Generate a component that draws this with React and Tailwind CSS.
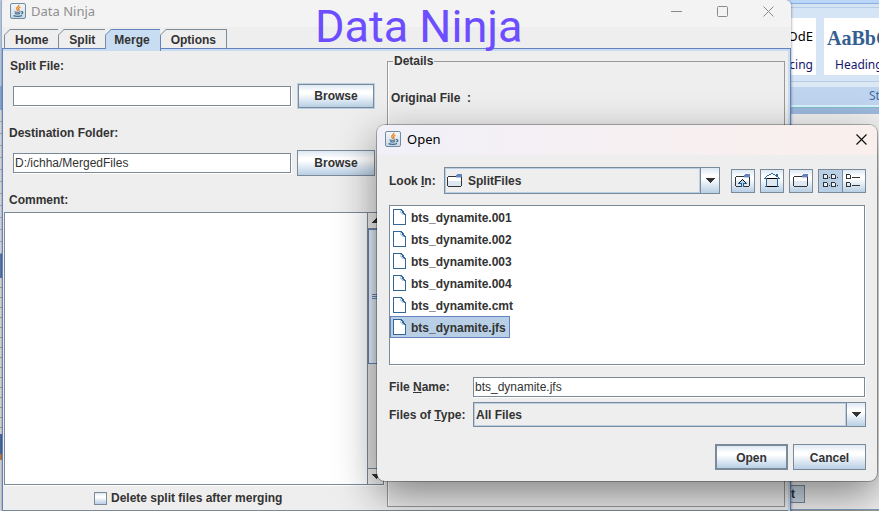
import React from "react";

const files = [
  "bts_dynamite.001",
  "bts_dynamite.002",
  "bts_dynamite.003",
  "bts_dynamite.004",
  "bts_dynamite.cmt",
  "bts_dynamite.jfs",
];

const metal = "bg-[linear-gradient(#dde8f3_0%,#ffffff_30%,#ffffff_40%,#b8cfe5_100%)]";
const field =
  "h-5 min-w-0 border border-[#7a8a99] bg-white pl-px text-xs text-[#333] shadow-[1px_1px_0_#fff] outline-none";

function JavaIcon() {
  return (
    <svg width="16" height="16" viewBox="0 0 16 16" fill="none" className="shrink-0" aria-hidden="true">
      <defs>
        <linearGradient id="cupTile" x1="0" y1="0" x2="0" y2="1">
          <stop offset="0" stopColor="#f6f8fa" />
          <stop offset="1" stopColor="#c9d8e4" />
        </linearGradient>
      </defs>
      <rect x="0.5" y="0.5" width="15" height="15" rx="1.5" fill="url(#cupTile)" stroke="#6f8ca4" />
      <path d="M8.8 1.8c.8 1.6-2.8 2.4-2 4.2.3.7.9 1 .8 1.800M10.400 4c-1.800.8-2.300 1.700-1.500 2.700.4.500.2.900-.2 1.300" stroke="#e8821e" strokeWidth="1.300" />
      <path d="M4.500 8.700c1.500.6 4.500.5 6 0M5 10.500c1.300.5 3.700.5 5 0M3.500 12.600c2.200 1 6.500.9 8.500-.1M11 8.700c2.300-.5 2.500 1.700.2 2.300" stroke="#3f6a8f" strokeWidth="1.200" />
    </svg>
  );
}

function FolderShape() {
  return (
    <>
      <path d="M1 3h13v9H1z" fill="#dde8f3" />
      <path d="M1 3h13v4H1z" fill="#fff" />
      <path d="M1 2h8v1H1zM0 3h1v9H0zM1 12h13v1H1zM14 3h1v9h-1z" fill="#333" />
      <path d="M10 0h5v3H9V1h1z" fill="#6382bf" />
      <path d="M9 3h5v1H9z" fill="#b8cfe5" />
    </>
  );
}

function FolderIcon() {
  return (
    <svg width="16" height="14" viewBox="0 0 16 14" shapeRendering="crispEdges" className="shrink-0" aria-hidden="true">
      <FolderShape />
    </svg>
  );
}

function FolderUpIcon() {
  return (
    <svg width="16" height="14" viewBox="0 0 16 14" shapeRendering="crispEdges" aria-hidden="true">
      <FolderShape />
      <path d="M7 6h1v1h1v1h1v1h1v1H9v3H6v-3H4V9h1V8h1V7h1z" fill="#b8cfe5" />
      <path d="M7 5h1v1H7zM6 6h1v1H6zM8 6h1v1H8zM5 7h1v1H5zM9 7h1v1H9zM4 8h1v1H4zM10 8h1v1h-1z" fill="#111" />
      <path d="M3 9h4v1H3zM8 9h4v1H8zM6 10h1v3H6zM8 10h1v3H8z" fill="#215f91" />
    </svg>
  );
}

function HomeIcon() {
  return (
    <svg width="16" height="15" viewBox="0 0 16 15" shapeRendering="crispEdges" aria-hidden="true">
      <path d="M3 6h10v7H3z" fill="#dde8f3" />
      <path d="M7 1h2v1h2v1h2v1h1v1H2V4h1V3h2V2h2z" fill="#fff" />
      <path d="M7 0h2v1H7zM5 1h2v1H5zM9 1h2v1H9zM3 2h2v1H3zM11 2h1v1h-1zM2 3h1v1H2zM1 4h1v1H1zM0 5h3v1H0zM13 5h3v1h-3zM14 4h1v1h-1zM12 1h2v3h-2zM2 6h1v8H2zM13 6h1v8h-1zM1 13h1v1H1zM14 13h1v1h-1z" fill="#2f6896" />
      <path d="M3 5h10v1H3zM3 13h10v1H3z" fill="#000" />
    </svg>
  );
}

function ListViewIcon() {
  return (
    <svg width="16" height="14" viewBox="0 0 16 14" shapeRendering="crispEdges" aria-hidden="true">
      <path d="M1 1h3v3H1zM9 1h3v3H9zM1 9h3v3H1zM9 9h3v3H9z" fill="#e8f0f8" />
      <path
        d="M0 0h4v1h1v4H0V0M1 1v3h3V1zM8 0h4v1h1v4H8V0M9 1v3h3V1zM0 8h4v1h1v4H0V8M1 9v3h3V9zM8 8h4v1h1v4H8V8M9 9v3h3V9zM6 3h1v1H6zM14 3h1v1h-1zM6 11h1v1H6zM14 11h1v1h-1z"
        fill="#333"
        fillRule="evenodd"
      />
    </svg>
  );
}

function DetailsViewIcon() {
  return (
    <svg width="16" height="14" viewBox="0 0 16 14" shapeRendering="crispEdges" aria-hidden="true">
      <path
        d="M0 0h4v1h1v4H0V0M1 1v3h3V1zM0 8h4v1h1v4H0V8M1 9v3h3V9zM6 3h8v1H6zM6 11h8v1H6z"
        fill="#333"
        fillRule="evenodd"
      />
    </svg>
  );
}

function FileIcon() {
  return (
    <svg width="13" height="16" viewBox="0 0 13 16" shapeRendering="crispEdges" className="shrink-0" aria-hidden="true">
      <path d="M1 1h7l4 4v10H1z" fill="#fff" />
      <path d="M0 0h9v1H1v14h11V6h1v10H0zM8 1h2v1H8zM9 2h2v1H9zM10 3h1v1h-1zM11 4h1v1h-1zM12 5h1v1h-1z" fill="#336699" />
      <path d="M7 1h1v2h1v1h1v1h1v1H9V5H8V4H7z" fill="#b8cfe5" />
      <path d="M8 2h1v2h1v1h1v1h1V5h-1V4h-1V3H9V2z" fill="#336699" />
    </svg>
  );
}

function Tab({ children, active }) {
  return (
    <button
      type="button"
      role="tab"
      aria-selected={!!active}
      className={
        active
          ? "relative -mb-0.5 h-[22px] border-t border-r border-[#6382bf] bg-[#c8ddf2] pr-2.5 pb-0.5 pl-2"
          : "relative h-5 border-t border-r border-[#7a8a99] px-[10px] first:border-l"
      }
    >
      <svg width="7" height="7" viewBox="0 0 7 7" className="absolute -top-px -left-px" aria-hidden="true">
        <path d="M0 0h6.500L0 6.500z" fill="#eee" />
        <path d="M0 6.500L6.500 0" stroke={active ? "#6382bf" : "#7a8a99"} />
      </svg>
      {children}
    </button>
  );
}

function Browse({ focused }) {
  return (
    <button
      type="button"
      className={`shrink-0 border border-[#7a8a99] ${metal} ${
        focused ? "m-px h-6 w-[76px] outline outline-[#b8cfe5]" : "h-[26px] w-[78px]"
      }`}
    >
      Browse
    </button>
  );
}

function Arrow() {
  return (
    <svg width="10" height="5" viewBox="0 0 10 5" shapeRendering="crispEdges" aria-hidden="true">
      <path d="M0 0h10L5 5z" fill="#333" />
    </svg>
  );
}

function Combo({ id, icon, value, tall }) {
  return (
    <div className={`flex min-w-0 flex-1 border border-[#7a8a99] ${tall ? "h-[27px]" : "h-[25px]"}`}>
      <div className="flex min-w-0 flex-1 items-center border border-[#b8cfe5]">
        {icon && <span className="pl-px">{icon}</span>}
        <select
          id={id}
          defaultValue={value}
          className={`min-w-0 flex-1 appearance-none bg-transparent outline-none ${icon ? "pl-[5px]" : "pl-px"}`}
        >
          <option>{value}</option>
        </select>
      </div>
      <span className={`pointer-events-none flex w-[19px] shrink-0 items-center justify-center border-l border-[#7a8a99] ${metal}`}>
        <Arrow />
      </span>
    </div>
  );
}

function DocumentApp() {
  return (
    <>
      <div className="absolute inset-y-0 left-0 w-1 bg-[#dcdfe4]" aria-hidden="true">
        <div className="h-[86px] bg-[#bdd2ee]" />
        <div className="h-6 bg-[#8fb0dc]" />
        <div className="h-36 bg-[repeating-linear-gradient(#dfe3ea_0_11px,#a9b0b9_11px_12px)]" />
        <div className="h-6 bg-[#5d7db5]" />
        <div className="h-[156px] bg-[repeating-linear-gradient(#e0e0e4_0_9px,#a8a3a3_9px_10px)]" />
        <div className="h-5 bg-[#4d6fa8]" />
        <div className="h-1.5 bg-[#b98250]" />
      </div>
      <div className="absolute inset-y-0 right-0 flex w-[100px] flex-col bg-[#f0f0f0] font-normal">
        <div className="h-[3px] bg-[#bcd6fb]" />
        <div className="h-1 border-t border-[#86aee0] bg-[#d5e3f2]" />
        <div className="flex h-[75px] gap-2 border-y border-[#b5cde6] bg-[#d6e5f5] pt-2.5 font-['Noto_Sans',sans-serif]">
          <div className="flex h-[57px] w-[37px] shrink-0 flex-col items-end justify-between bg-white pt-2.5 pr-[3px] pb-0.5 whitespace-nowrap">
            <span className="text-[13px] leading-4 text-black">OdE</span>
            <span className="text-xs leading-4 text-[#15156b]">cing</span>
          </div>
          <div className="flex h-[57px] w-[55px] shrink-0 flex-col justify-between bg-white pt-2.5 pb-0.5 pl-[3px] whitespace-nowrap">
            <span className="font-['Liberation_Serif',serif] text-xl leading-5 font-bold text-[#365f91]">AaBbC</span>
            <span className="pl-2 text-xs leading-4 text-[#15156b]">Heading</span>
          </div>
        </div>
        <div className="h-[5px] bg-[#dce8f4]" />
        <div className="flex h-[18px] items-center justify-end bg-[#bfd5ef] font-['Noto_Sans',sans-serif] text-xs text-[#3e6aaa]">
          <span className="w-2.5">St</span>
        </div>
        <div className="h-[3px] border-b border-[#7dbdcb] bg-[#d9f1fa]" />
        <div className="h-1.5 bg-[#9db8dd]" />
        <div className="flex flex-1 flex-col justify-end">
          <div className="mb-1.5 ml-3 flex h-[18px] w-3.5 items-center border border-l-0 border-[#7a8a99] bg-[#cbd9e6] font-bold">t</div>
          <div className="h-0.5 border-t border-[#7d9cc0] bg-[#999]" />
        </div>
      </div>
    </>
  );
}

function MergeWindow() {
  return (
    <main className="absolute inset-y-0 right-[88px] left-0.5 flex flex-col rounded-tr-md bg-[#eee] shadow-[0_0_3px_rgba(0,0,0,0.5)]">
      <header className="flex h-[27px] shrink-0 items-start rounded-t-md bg-[#f3f3f3] pt-[3px] pl-2">
        <JavaIcon />
        <h1 className="pl-[5px] font-['Noto_Sans',sans-serif] text-[13px] leading-4 font-normal text-[#8f8f8f]">Data Ninja</h1>
        <div className="ml-auto flex gap-[35px] pt-[3px] pr-[17px] text-[#8a8a8a]">
          <button type="button" aria-label="Minimize">
            <svg width="11" height="11" viewBox="0 0 11 11" stroke="currentColor"><path d="M0 5.500h11" /></svg>
          </button>
          <button type="button" aria-label="Maximize">
            <svg width="11" height="11" viewBox="0 0 11 11" stroke="currentColor" fill="none"><rect x="0.500" y="0.500" width="10" height="10" rx="1" /></svg>
          </button>
          <button type="button" aria-label="Close">
            <svg width="11" height="11" viewBox="0 0 11 11" stroke="currentColor"><path d="M.5.5l10 10M10.500.5l-10 10" /></svg>
          </button>
        </div>
      </header>
      <div role="tablist" className="relative mt-0.5 flex h-[19px] shrink-0 pl-0.5">
        <Tab>Home</Tab>
        <Tab>Split</Tab>
        <Tab active>Merge</Tab>
        <Tab>Options</Tab>
      </div>
      <div className="flex min-h-0 flex-1 flex-col border-x border-t border-[#6382bf]">
        <div className="flex min-h-0 flex-1 flex-col border-t-2 border-r-2 border-[#c8ddf2]">
          <div className="flex min-h-0 flex-1 gap-[3px] border-b border-[#7a8a99] pl-px">
            <form className="flex w-[380px] shrink-0 flex-col" onSubmit={(e) => e.preventDefault()}>
              <label htmlFor="split" className="mt-[7px] pl-1.5 leading-4">Split File:</label>
              <div className="mt-[9px] flex items-center gap-1.5 pr-[9px] pl-[9px]">
                <input id="split" type="text" className={`${field} flex-1`} />
                <Browse focused />
              </div>
              <label htmlFor="dest" className="mt-4 pl-[5px] leading-4">Destination Folder:</label>
              <div className="mt-[9px] flex items-center gap-1.5 pr-[9px] pl-[9px]">
                <input id="dest" type="text" defaultValue="D:/ichha/MergedFiles" className={`${field} flex-1`} />
                <Browse />
              </div>
              <label htmlFor="comment" className="mt-4 mb-1 pl-[5px] leading-4">Comment:</label>
              <div className="flex min-h-0 flex-1 border border-[#7a8a99] shadow-[1px_1px_0_#fff]">
                <textarea id="comment" className="min-w-0 flex-1 resize-none bg-white p-1 font-normal outline-none" />
                <div className="flex w-4 flex-col border-l border-[#7a8a99] bg-[#e4e4e4]" aria-hidden="true">
                  <div className="flex h-4 items-center justify-center border-b border-[#7a8a99] bg-[#eee]">
                    <span className="rotate-180"><Arrow /></span>
                  </div>
                  <div className="flex h-[135px] flex-col items-center justify-center gap-px border border-[#6382bf] bg-[linear-gradient(90deg,#f4f8fc,#b8cfe5)]">
                    <span className="h-px w-2 bg-[#6382bf]" />
                    <span className="h-px w-2 bg-[#6382bf]" />
                    <span className="h-px w-2 bg-[#6382bf]" />
                  </div>
                  <div className="mt-auto flex h-4 items-center justify-center border-t border-[#7a8a99] bg-[#eee]"><Arrow /></div>
                </div>
              </div>
              <label className="flex h-[25px] shrink-0 items-center gap-1 pt-px pl-[90px]">
                <input type="checkbox" className={`size-[13px] appearance-none border border-[#7a8a99] ${metal}`} />
                Delete split files after merging
              </label>
            </form>
            <fieldset className="mt-0.5 mr-[3px] mb-[3px] min-w-0 flex-1 border border-[#999] shadow-[inset_1px_0_0_#fff]">
              <legend className="ml-[5px] px-px leading-4">Details</legend>
              <p className="mt-[21px] pl-[3px] leading-4 whitespace-pre">Original File  :</p>
            </fieldset>
          </div>
        </div>
      </div>
    </main>
  );
}

function OpenDialog() {
  const tool = `flex h-6 items-center justify-center border border-[#7a8a99]`;
  return (
    <section
      role="dialog"
      aria-label="Open"
      className="absolute top-[125px] right-0.5 left-[377px] overflow-hidden rounded-lg bg-[#eee] shadow-[0_0_0_1px_rgba(0,0,0,0.28),0_14px_42px_rgba(0,0,0,0.46)]"
    >
      <header className="flex h-[30px] items-center gap-1.5 bg-linear-to-r from-[#f1f0f8] to-[#faefec] pr-2.5 pb-0.5 pl-2">
        <JavaIcon />
        <h2 className="font-['Noto_Sans',sans-serif] text-[13px] leading-4 font-normal text-black">Open</h2>
        <button type="button" aria-label="Close dialog" className="ml-auto">
          <svg width="11" height="11" viewBox="0 0 11 11" stroke="#111" strokeWidth="1.200"><path d="M.5.5l10 10M10.500.5l-10 10" /></svg>
        </button>
      </header>
      <div className="pt-3 pr-[11px] pb-[11px] pl-3">
        <div className="flex items-center">
          <label htmlFor="look" className="w-[55px] shrink-0">Look <u>I</u>n:</label>
          <Combo id="look" icon={<FolderIcon />} value="SplitFiles" tall />
          <div className="ml-[11px] flex shrink-0 gap-[5px]">
            <button type="button" aria-label="Up one level" className={`w-6 ${tool} ${metal}`}><FolderUpIcon /></button>
            <button type="button" aria-label="Home folder" className={`w-6 ${tool} ${metal}`}><HomeIcon /></button>
            <button type="button" aria-label="New folder" className={`w-6 ${tool} ${metal}`}><FolderIcon /></button>
            <div className="flex">
              <button type="button" aria-label="List view" className={`w-[25px] ${tool} bg-[#b8cfe5]`}><ListViewIcon /></button>
              <button type="button" aria-label="Details view" className={`w-[23px] border-l-0 ${tool} ${metal}`}><DetailsViewIcon /></button>
            </div>
          </div>
        </div>
        <ul role="listbox" aria-label="Files" className="mt-[11px] mr-px h-40 border border-[#7a8a99] bg-white shadow-[1px_1px_0_#fff]">
          {files.map((name) => {
            const selected = name === "bts_dynamite.jfs";
            return (
              <li
                key={name}
                role="option"
                aria-selected={selected}
                className={`flex h-[22px] w-fit items-center gap-[5px] border pr-[3px] pl-0.5 ${
                  selected ? "border-[#6382bf] bg-[#b8cfe5]" : "border-transparent"
                }`}
              >
                <FileIcon />
                <span className="pt-0.5">{name}</span>
              </li>
            );
          })}
        </ul>
        <div className="mt-3 flex items-center pr-px">
          <label htmlFor="filename" className="w-[84px] shrink-0">File <u>N</u>ame:</label>
          <input id="filename" type="text" defaultValue="bts_dynamite.jfs" className={`${field} flex-1`} />
        </div>
        <div className="mt-[5px] flex items-center">
          <label htmlFor="filetype" className="w-[84px] shrink-0">Files of <u>T</u>ype:</label>
          <Combo id="filetype" value="All Files" />
        </div>
        <div className="mt-[17px] flex justify-end gap-[5px]">
          <button type="button" className={`h-[26px] w-[73px] border-2 border-[#7a8a99] pt-px ${metal}`}>Open</button>
          <button type="button" className={`h-[26px] w-[73px] border border-[#7a8a99] pt-px ${metal}`}>Cancel</button>
        </div>
      </div>
    </section>
  );
}

export default function App() {
  return (
    <div className="relative h-screen w-full overflow-hidden bg-[#e4e4e4] font-['Liberation_Sans',Arial,sans-serif] text-xs font-bold text-[#333] [&_input]:font-normal">
      <DocumentApp />
      <MergeWindow />
      <p className="absolute top-0 left-[315px] font-[Roboto,sans-serif] text-[45px] leading-[53px] font-normal text-[#6c4dff]">Data Ninja</p>
      <OpenDialog />
    </div>
  );
}
